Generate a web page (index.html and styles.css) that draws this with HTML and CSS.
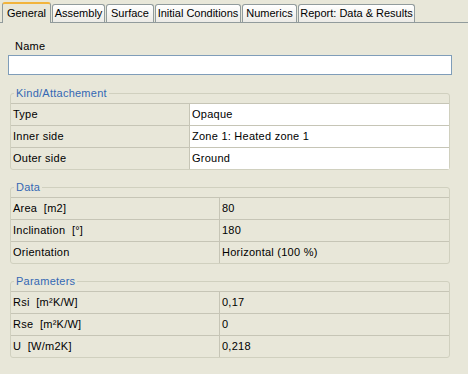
FILE: index.html
```html
<!DOCTYPE html>
<html>
<head>
<meta charset="utf-8">
<link rel="stylesheet" href="styles.css">
</head>
<body>
<div class="tabs">
  <div class="tab active t-general">General</div>
  <div class="tab t-assembly">Assembly</div>
  <div class="tab t-surface">Surface</div>
  <div class="tab t-initial">Initial Conditions</div>
  <div class="tab t-numerics">Numerics</div>
  <div class="tab t-report">Report: Data &amp; Results</div>
</div>
<div class="page">
  <div class="name-label">Name</div>
  <div class="name-input"></div>

  <div class="group g1">
    <div class="legend">Kind/Attachement</div>
    <div class="row"><div class="key">Type</div><div class="val white">Opaque</div></div>
    <div class="row"><div class="key">Inner side</div><div class="val white">Zone 1: Heated zone 1</div></div>
    <div class="row"><div class="key">Outer side</div><div class="val white">Ground</div></div>
  </div>

  <div class="group g2">
    <div class="legend">Data</div>
    <div class="row"><div class="key">Area&nbsp; [m2]</div><div class="val">80</div></div>
    <div class="row"><div class="key">Inclination&nbsp; [°]</div><div class="val">180</div></div>
    <div class="row"><div class="key">Orientation</div><div class="val">Horizontal (100 %)</div></div>
  </div>

  <div class="group g2">
    <div class="legend">Parameters</div>
    <div class="row"><div class="key">Rsi&nbsp; [m²K/W]</div><div class="val">0,17</div></div>
    <div class="row"><div class="key">Rse&nbsp; [m²K/W]</div><div class="val">0</div></div>
    <div class="row"><div class="key">U&nbsp; [W/m2K]</div><div class="val">0,218</div></div>
  </div>
</div>
</body>
</html>
```
FILE: styles.css
```css
html, body {
  margin: 0;
  padding: 0;
  background: #e8e7d9;
  font-family: "Liberation Sans", Arial, sans-serif;
  font-size: 11px;
  color: #000;
  width: 468px;
  height: 374px;
  overflow: hidden;
}

.tabs {
  display: flex;
  align-items: flex-end;
  height: 22px;
  padding-left: 2px;
  position: relative;
  z-index: 2;
}

.tab {
  box-sizing: border-box;
  height: 18px;
  line-height: 17px;
  margin-left: 1px;
  border: 1px solid #919b9c;
  border-bottom: none;
  border-radius: 3px 3px 0 0;
  background: linear-gradient(#ffffff, #ecebe6);
  white-space: nowrap;
  text-align: center;
}

.tab.active {
  margin-left: 0;
  height: 21px;
  line-height: 18px;
  margin-bottom: -1px;
  background: #e8e7d9;
  border-top: 2px solid #f2b43c;
}

.t-general { width: 49px; }
.t-assembly { width: 53px; }
.t-surface { width: 48px; }
.t-initial { width: 86px; }
.t-numerics { width: 55px; }
.t-report { width: 117px; }

.page {
  border-top: 1px solid #919b9c;
  height: 351px;
  display: flex;
  flex-direction: column;
  letter-spacing: 0.25px;
}

.name-label {
  margin: 16px 0 0 15px;
  height: 16px;
  line-height: 14px;
}

.name-input {
  margin: 0 0 0 8px;
  width: 442px;
  height: 18px;
  border: 1px solid #7f9db9;
  background: #fff;
}

.group {
  position: relative;
  margin: 18px 18px 0 10px;
  border: 1px solid #d0d0bf;
  border-radius: 3px;
  padding-top: 9px;
}

.group.g2 {
  margin-top: 17px;
}

.legend {
  position: absolute;
  top: -8px;
  left: 3px;
  padding: 0 2px;
  background: #e8e7d9;
  color: #3468b4;
  line-height: 14px;
}

.row {
  display: flex;
  height: 21px;
  border-top: 1px solid #c6c5b6;
  line-height: 21px;
}

.key {
  width: 176px;
  padding-left: 2px;
  border-right: 1px solid #c6c5b6;
}

.g2 .key {
  width: 206px;
}

.val {
  flex: 1;
  padding-left: 2px;
}

.val.white {
  background: #fff;
}
```
